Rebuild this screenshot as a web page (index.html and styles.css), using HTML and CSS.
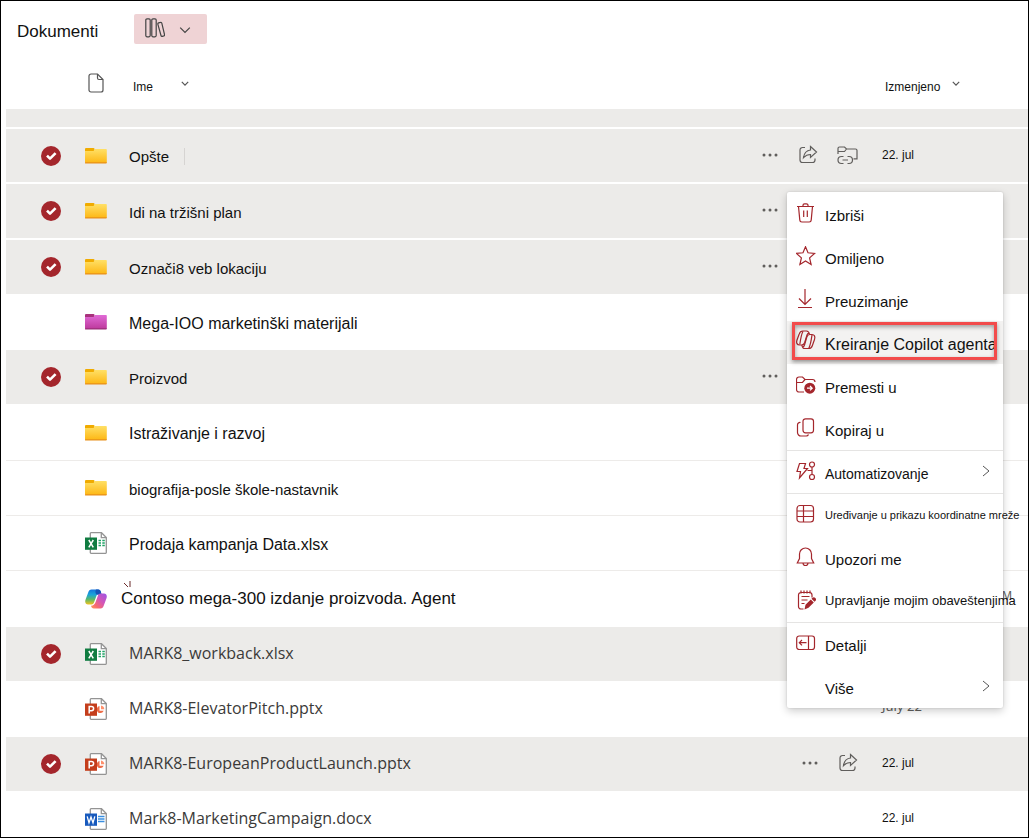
FILE: index.html
```html
<!DOCTYPE html>
<html lang="sr-Latn">
<head>
<meta charset="utf-8">
<meta name="viewport" content="width=device-width, initial-scale=1">
<title>Dokumenti</title>
<link rel="stylesheet" href="styles.css">
</head>
<body>
<svg class="defs" aria-hidden="true">
  <defs>
    <linearGradient id="g-yellow" x1="0" y1="0" x2="0" y2="1"><stop offset="0" stop-color="#ffe066"/><stop offset="1" stop-color="#fdb714"/></linearGradient>
    <linearGradient id="g-pink" x1="0" y1="0" x2="0" y2="1"><stop offset="0" stop-color="#e06ad6"/><stop offset="1" stop-color="#bd3a9c"/></linearGradient>
    <linearGradient id="g-cop-a" x1="0" y1="0" x2="0" y2="1"><stop offset="0" stop-color="#1474dc"/><stop offset=".35" stop-color="#1aa5d8"/><stop offset=".65" stop-color="#58b86b"/><stop offset="1" stop-color="#f4c21c"/></linearGradient>
    <linearGradient id="g-cop-b" x1="1" y1="0" x2="0" y2="1"><stop offset="0" stop-color="#9a55e8"/><stop offset=".45" stop-color="#d556b5"/><stop offset=".75" stop-color="#f76b6e"/><stop offset="1" stop-color="#ff9a5a"/></linearGradient>
    <symbol id="tick" viewBox="0 0 20 20"><circle cx="10" cy="10" r="10" fill="#a4262c"/><path d="M6 9.700l3 3 5.600-5.600" fill="none" stroke="#fff" stroke-width="2.600" stroke-linejoin="round"/></symbol>
    <symbol id="folder" viewBox="0 0 22 22"><path d="M0 4a1 1 0 0 1 1-1h7.500a1 1 0 0 1 1 1v3H0z" fill="#f0ab00"/><path d="M0 6h8.500l1.500-2H21a.8.8 0 0 1 .8.800V17a1 1 0 0 1-1 1H1a1 1 0 0 1-1-1z" fill="url(#g-yellow)"/><path d="M0 17.200h21.800a1 1 0 0 1-1 1.300H1a1 1 0 0 1-1-1.300z" fill="#e8901a"/></symbol>
    <symbol id="folder-pink" viewBox="0 0 22 22"><path d="M0 4a1 1 0 0 1 1-1h7.500a1 1 0 0 1 1 1v3H0z" fill="#a8327c"/><path d="M0 6h8.500l1.500-2H21a.8.8 0 0 1 .8.800V17a1 1 0 0 1-1 1H1a1 1 0 0 1-1-1z" fill="url(#g-pink)"/><path d="M0 17.200h21.800a1 1 0 0 1-1 1.300H1a1 1 0 0 1-1-1.300z" fill="#9b2f78"/></symbol>
    <symbol id="sheet" viewBox="0 0 22 22"><path d="M6 .7h10.500l4.800 4.800v15.100a.7.700 0 0 1-.7.700H6a.7.700 0 0 1-.7-.7V1.400a.7.700 0 0 1 .7-.7z" fill="#fff" stroke="#949494" stroke-width="1.300"/><path d="M16.300.8v4.900h4.900" fill="none" stroke="#949494" stroke-width="1.300"/></symbol>
    <symbol id="excel" viewBox="0 0 22 22"><use href="#sheet"/><path d="M13.500 8.500h2.500m1.300 0h2.500M13.500 11h2.500m1.300 0h2.500M13.500 13.500h2.500m1.300 0h2.500" stroke="#21a366" stroke-width="1.300"/><path d="M0 5.500h12v12.300H0z" fill="#107c41"/><path d="M3.800 8l4.500 7.300M8.300 8l-4.500 7.300" stroke="#fff" stroke-width="1.500"/></symbol>
    <symbol id="ppt" viewBox="0 0 22 22"><use href="#sheet"/><path d="M14.500 8a3.600 3.600 0 1 0 4.200 4.700h-4.200z" fill="#ed6c47"/><path d="M16 7.500a4 4 0 0 1 3.300 3.800H16z" fill="#ff8f6b"/><path d="M0 5.500h12v12.300H0z" fill="#c43e1c"/><path d="M4.200 15.500v-7h2.300a2.100 2.100 0 0 1 0 4.200H4.200" fill="none" stroke="#fff" stroke-width="1.500"/></symbol>
    <symbol id="word" viewBox="0 0 22 22"><use href="#sheet"/><path d="M13 8.500h6.500M13 11h6.500M13 13.500h6.500" stroke="#3a8ee0" stroke-width="1.400"/><path d="M0 5.500h12v12.300H0z" fill="#185abd"/><path d="M2.200 8.300L4 14.800 6 9l2 5.800 1.800-6.500" fill="none" stroke="#fff" stroke-width="1.300"/></symbol>
    <symbol id="copilot" viewBox="0 0 22 22"><path d="M16 4.200c-.5-1.800-1.200-2.700-2.800-2.700H6.500C4.800 1.500 3.800 2.800 3.200 4.500L.6 11.500C-.5 14.700.8 16.500 3 16.500h3.500c1.600 0 2.200-1 2.700-2.500l2-5.500C12 6 13.500 4.200 16 4.200z" fill="url(#g-cop-a)"/><path d="M11 1.500h2.200c1.600 0 2.300.9 2.800 2.700l.8 2.500h-5c-1.500-1-1.800-3.500-.8-5.200z" fill="#1554b8"/><path d="M6 17.800c.5 1.800 1.200 2.700 2.800 2.700h6.700c1.700 0 2.700-1.300 3.300-3l2.600-7c1.100-3.200-.2-5-2.400-5h-3.500c-1.600 0-2.200 1-2.700 2.500l-2 5.500C10 16 8.500 17.800 6 17.800z" fill="url(#g-cop-b)"/></symbol>
    <symbol id="dots" viewBox="0 0 16 4"><circle cx="2" cy="2" r="1.500"/><circle cx="8" cy="2" r="1.500"/><circle cx="14" cy="2" r="1.500"/></symbol>
    <symbol id="share" viewBox="0 0 20 20"><path d="M7 2.500H4.500A2.500 2.500 0 0 0 2 5v10a2.500 2.500 0 0 0 2.500 2.500h10A2.500 2.500 0 0 0 17 15v-1.500"/><path d="M12.500 1.500l6 5.500-6 5.500V9.500c-3 0-5 1-7 3.200.6-4.500 3-7.300 7-7.700z"/></symbol>
    <symbol id="folder-link" viewBox="0 0 22 22"><path d="M2 10V4.500A1.500 1.500 0 0 1 3.500 3h5l2 2h9A1.500 1.500 0 0 1 21 6.500v8.300h-3.500M2 7.500h6.500l2-2.500"/><path d="M7.500 12.500h-2a3.500 3.500 0 0 0 0 7h2m4 0h1.500a3.500 3.500 0 0 0 0-7h-1.500M6.500 16h5.500"/></symbol>
    <symbol id="down" viewBox="0 0 10 6"><path d="M1 1l4 4 4-4"/></symbol>
    <symbol id="right" viewBox="0 0 8 12"><path d="M1 1l6 5-6 5"/></symbol>
  </defs>
</svg>

<main class="page">
  <header class="toolbar">
    <h1 class="title">Dokumenti</h1>
    <button class="view-button" type="button" aria-label="Prikaz">
      <svg class="books" viewBox="0 0 20 20" aria-hidden="true"><rect x=".8" y=".8" width="4.400" height="18" rx="1.200"/><rect x="6.800" y=".8" width="4.400" height="18" rx="1.200"/><path d="M13.600 4.900l1.900-.5c.6-.2 1.100.1 1.300.7l2.700 11.400c.2.700-.1 1.200-.7 1.400l-1.400.4c-.7.200-1.200-.1-1.400-.8L12.900 6.300c-.2-.7.100-1.200.7-1.400z"/></svg>
      <svg class="view-chevron" aria-hidden="true"><use href="#down"/></svg>
    </button>
  </header>

  <table class="files">
    <colgroup><col class="col-check"><col class="col-icon"><col class="col-name"><col class="col-actions"><col class="col-date"></colgroup>
    <thead>
      <tr>
        <td></td>
        <th scope="col" aria-label="Tip"><svg class="page-icon" viewBox="0 0 16 20" aria-hidden="true"><path d="M3 1h6.500L15 6.500V17a2 2 0 0 1-2 2H3a2 2 0 0 1-2-2V3a2 2 0 0 1 2-2z"/><path d="M9.500 1v4a1.500 1.500 0 0 0 1.500 1.500h4"/></svg></th>
        <th scope="col"><button class="sort sort-name" type="button"><span>Ime</span><svg aria-hidden="true"><use href="#down"/></svg></button></th>
        <td></td>
        <th scope="col"><button class="sort sort-date" type="button"><span>Izmenjeno</span><svg aria-hidden="true"><use href="#down"/></svg></button></th>
      </tr>
    </thead>
    <tbody>
      <tr class="selected gapped partial"><td></td><td></td><td></td><td></td><td></td></tr>
      <tr class="selected gapped">
        <td><label class="check"><input type="checkbox" checked aria-label="Opšte"><svg aria-hidden="true"><use href="#tick"/></svg></label></td>
        <td><svg class="file-icon" aria-hidden="true"><use href="#folder"/></svg></td>
        <td class="label"><a class="name marked" href="#">Opšte</a></td>
        <td><div class="actions"><button type="button" aria-label="Više radnji"><svg class="dots"><use href="#dots"/></svg></button><button type="button" aria-label="Deli"><svg class="line"><use href="#share"/></svg></button><button type="button" aria-label="Prečica"><svg class="line wide"><use href="#folder-link"/></svg></button></div></td>
        <td class="date">22. jul</td>
      </tr>
      <tr class="selected gapped roomy">
        <td><label class="check"><input type="checkbox" checked aria-label="Idi na tržišni plan"><svg aria-hidden="true"><use href="#tick"/></svg></label></td>
        <td><svg class="file-icon" aria-hidden="true"><use href="#folder"/></svg></td>
        <td class="label"><a class="name" href="#">Idi na tržišni plan</a></td>
        <td><div class="actions"><button type="button" aria-label="Više radnji"><svg class="dots"><use href="#dots"/></svg></button><button type="button" aria-label="Deli"><svg class="line"><use href="#share"/></svg></button><button type="button" aria-label="Prečica"><svg class="line wide"><use href="#folder-link"/></svg></button></div></td>
        <td></td>
      </tr>
      <tr class="selected">
        <td><label class="check"><input type="checkbox" checked aria-label="Označi8 veb lokaciju"><svg aria-hidden="true"><use href="#tick"/></svg></label></td>
        <td><svg class="file-icon" aria-hidden="true"><use href="#folder"/></svg></td>
        <td class="label"><a class="name" href="#">Označi8 veb lokaciju</a></td>
        <td><div class="actions"><button type="button" aria-label="Više radnji"><svg class="dots"><use href="#dots"/></svg></button><button type="button" aria-label="Deli"><svg class="line"><use href="#share"/></svg></button><button type="button" aria-label="Prečica"><svg class="line wide"><use href="#folder-link"/></svg></button></div></td>
        <td></td>
      </tr>
      <tr class="bare">
        <td></td>
        <td><svg class="file-icon" aria-hidden="true"><use href="#folder-pink"/></svg></td>
        <td class="label"><a class="name large" href="#">Mega-IOO marketinški materijali</a></td>
        <td></td><td></td>
      </tr>
      <tr class="selected">
        <td><label class="check"><input type="checkbox" checked aria-label="Proizvod"><svg aria-hidden="true"><use href="#tick"/></svg></label></td>
        <td><svg class="file-icon" aria-hidden="true"><use href="#folder"/></svg></td>
        <td class="label"><a class="name" href="#">Proizvod</a></td>
        <td><div class="actions"><button type="button" aria-label="Više radnji"><svg class="dots"><use href="#dots"/></svg></button><button type="button" aria-label="Deli"><svg class="line"><use href="#share"/></svg></button><button type="button" aria-label="Prečica"><svg class="line wide"><use href="#folder-link"/></svg></button></div></td>
        <td></td>
      </tr>
      <tr class="roomy">
        <td></td>
        <td><svg class="file-icon" aria-hidden="true"><use href="#folder"/></svg></td>
        <td class="label"><a class="name large" href="#">Istraživanje i razvoj</a></td>
        <td></td><td></td>
      </tr>
      <tr>
        <td></td>
        <td><svg class="file-icon" aria-hidden="true"><use href="#folder"/></svg></td>
        <td class="label"><a class="name" href="#">biografija-posle škole-nastavnik</a></td>
        <td></td><td></td>
      </tr>
      <tr>
        <td></td>
        <td><svg class="file-icon" aria-hidden="true"><use href="#excel"/></svg></td>
        <td class="label"><a class="name large" href="#">Prodaja kampanja Data.xlsx</a></td>
        <td></td><td></td>
      </tr>
      <tr class="roomy bare">
        <td></td>
        <td><svg class="file-icon" aria-hidden="true"><use href="#copilot"/></svg></td>
        <td class="outdent"><a class="name larger" href="#">Contoso mega-300 izdanje proizvoda. Agent<svg class="spark" viewBox="0 0 8 8" aria-hidden="true"><path d="M1 2l4 4M7 0v6"/></svg></a></td>
        <td></td>
        <td class="date tail">M</td>
      </tr>
      <tr class="selected">
        <td><label class="check"><input type="checkbox" checked aria-label="MARK8_workback.xlsx"><svg aria-hidden="true"><use href="#tick"/></svg></label></td>
        <td><svg class="file-icon" aria-hidden="true"><use href="#excel"/></svg></td>
        <td class="latin"><a class="name" href="#">MARK8_workback.xlsx</a></td>
        <td></td><td></td>
      </tr>
      <tr class="bare">
        <td></td>
        <td><svg class="file-icon" aria-hidden="true"><use href="#ppt"/></svg></td>
        <td class="latin"><a class="name" href="#">MARK8-ElevatorPitch.pptx</a></td>
        <td></td>
        <td class="date muted">July 22</td>
      </tr>
      <tr class="selected">
        <td><label class="check"><input type="checkbox" checked aria-label="MARK8-EuropeanProductLaunch.pptx"><svg aria-hidden="true"><use href="#tick"/></svg></label></td>
        <td><svg class="file-icon" aria-hidden="true"><use href="#ppt"/></svg></td>
        <td class="latin"><a class="name" href="#">MARK8-EuropeanProductLaunch.pptx</a></td>
        <td><div class="actions"><button type="button" aria-label="Više radnji"><svg class="dots"><use href="#dots"/></svg></button><button type="button" aria-label="Deli"><svg class="line"><use href="#share"/></svg></button></div></td>
        <td class="date">22. jul</td>
      </tr>
      <tr class="bare">
        <td></td>
        <td><svg class="file-icon" aria-hidden="true"><use href="#word"/></svg></td>
        <td class="latin"><a class="name" href="#">Mark8-MarketingCampaign.docx</a></td>
        <td></td>
        <td class="date">22. jul</td>
      </tr>
    </tbody>
  </table>

  <div class="menu" role="menu">
    <button class="item" type="button" role="menuitem"><svg viewBox="0 0 20 20"><path d="M1 3.500h17M7 3.500V2.300A1.500 1.500 0 0 1 8.500.8h2A1.500 1.500 0 0 1 12 2.300v1.200M2.500 3.500l1.300 13.600A2 2 0 0 0 5.800 19h7.400a2 2 0 0 0 2-1.900L16.500 3.500M7.700 7.500v6.500M11.300 7.500v6.500"/></svg><span>Izbriši</span></button>
    <button class="item" type="button" role="menuitem"><svg viewBox="0 0 20 20"><path d="M9.500.8l2.500 6 6.600.6-5 4.500 1.500 6.600-5.600-3.500-5.600 3.500 1.500-6.600-5-4.500 6.600-.6z"/></svg><span>Omiljeno</span></button>
    <button class="item" type="button" role="menuitem"><svg viewBox="0 0 20 20"><path d="M9 0v15M3 9.500l6 6 6-6M2 18.500h14"/></svg><span>Preuzimanje</span></button>
    <button class="item current" type="button" role="menuitem"><svg class="raised" viewBox="0 0 20 20"><path d="M13.500 4.300C13 2.200 12.200 1 10.500 1H6.800C5 1 3.800 2 3.200 4L1 10c-1 3 .2 5 2.500 5h2.200c1.600 0 2.500-1 3-2.500L11 5c.3-1 .8-2 2.300-2"/><path d="M5.800 14.800C6.300 17.500 7 18.500 8.800 18.500h4c1.800 0 3-1 3.600-3L18.500 9.500c1-3-.2-5-2.500-5h-2.200c-1.600 0-2.500 1-3 2.500L8.500 15c-.3 1-.8 1.800-1.800 2M7 1.200C5.500 4 4.800 7 3.800 14.500M12.800 18.300c1.500-3 2.200-6 3.200-13.500"/></svg><span class="large">Kreiranje Copilot agenta</span></button>
    <button class="item" type="button" role="menuitem"><svg viewBox="0 0 20 20"><path d="M8 17H3a2.500 2.500 0 0 1-2.500-2.500v-10A2.500 2.500 0 0 1 3 2h3.500L9 4.500h7.500A2.500 2.500 0 0 1 19 7M.5 7.500h6L9 4.500"/><circle cx="13.800" cy="13.200" r="5.500" class="solid"/><path class="white" d="M11 13.200h5M14 11l2.200 2.200-2.200 2.200"/></svg><span>Premesti u</span></button>
    <button class="item" type="button" role="menuitem"><svg viewBox="0 0 20 20"><rect x="7" y=".8" width="10.500" height="14" rx="2.500"/><path d="M4.500 4.500A2.500 2.500 0 0 0 1.500 7v7.500A3.500 3.500 0 0 0 5 18h5a2.500 2.500 0 0 0 2.500-1.500"/></svg><span>Kopiraj u</span></button>
    <button class="item divided" type="button" role="menuitem"><svg viewBox="0 0 20 20"><path d="M3.500 2.500h6L8 7.500h3.500L3.500 17l1-6.500H1z"/><circle cx="16" cy="3.500" r="2.500"/><circle cx="16" cy="16" r="2.500"/><path d="M16 6v7.500M11.500 9.500H16"/></svg><span class="narrow">Automatizovanje</span><svg class="more"><use href="#right"/></svg></button>
    <button class="item divided" type="button" role="menuitem"><svg viewBox="0 0 20 20"><rect x="1" y="1.500" width="16.500" height="16.500" rx="3"/><path d="M1 7h16.500M1 12.500h16.500M7.500 1.500V18"/></svg><span class="small">Uređivanje u prikazu koordinatne mreže</span></button>
    <button class="item" type="button" role="menuitem"><svg viewBox="0 0 20 20"><path d="M9.500 1a6 6 0 0 0-6 6v4.500L1.300 16h16.400l-2.200-4.500V7a6 6 0 0 0-6-6zM7 16a2.500 2.500 0 0 0 5 0"/></svg><span>Upozori me</span></button>
    <button class="item" type="button" role="menuitem"><svg viewBox="0 0 20 20"><path d="M7.500 19H5a2.500 2.500 0 0 1-2.500-2.500V5A2.500 2.500 0 0 1 5 2.500h8.500A2.500 2.500 0 0 1 16 5v2.500M5 .5v3M8 .5v3M11 .5v3M14 .5v3M5.500 6.500h8M5.500 10h6M5.500 13.500h3"/><path class="solid" d="M9.500 14.800l5.300-5.300 3 3-5.300 5.300-4 1.600zM15.500 8.800l.8-.8a2.100 2.100 0 0 1 3 3l-.8.800z"/></svg><span class="medium">Upravljanje mojim obaveštenjima</span></button>
    <button class="item divided" type="button" role="menuitem"><svg viewBox="0 0 20 20"><rect x=".7" y="3" width="17.800" height="13.500" rx="2.500"/><path d="M12.500 3v13.500M10.500 9.700H3.500M6 7L3.300 9.700 6 12.400"/></svg><span>Detalji</span></button>
    <button class="item" type="button" role="menuitem"><svg viewBox="0 0 20 20"></svg><span>Više</span><svg class="more"><use href="#right"/></svg></button>
  </div>
</main>
</body>
</html>
```
FILE: styles.css
```css
* { box-sizing: border-box; }

body {
  margin: 0;
  background: #fff;
  color: #111;
  font-family: "Liberation Sans", Arial, sans-serif;
  font-size: 15px;
}

button {
  margin: 0;
  padding: 0;
  border: 0;
  background: none;
  color: inherit;
  font: inherit;
  text-align: left;
}

svg { display: block; flex: none; }
.defs { position: absolute; width: 0; height: 0; }

.page {
  position: relative;
  height: 100vh;
  overflow: hidden;
  border: 1px solid #000;
  padding-left: 5px;
}

.toolbar {
  display: flex;
  align-items: center;
  gap: 36px;
  height: 57px;
  padding-left: 11px;
}

.title { margin: 4px 0 0; font-size: 17px; font-weight: 400; line-height: 20px; }

.view-button {
  display: flex;
  align-items: center;
  gap: 14px;
  height: 30px;
  margin-bottom: 2px;
  padding: 0 16px 2px 11px;
  border-radius: 2px;
  background: #efd3d5;
}

.books { width: 20px; height: 20px; fill: none; stroke: #444; stroke-width: 1.2; }
.view-chevron { width: 12px; height: 8px; margin-top: 4px; fill: none; stroke: #444; }

/* File list */
.files { width: 100%; table-layout: fixed; border-spacing: 0; }
.col-check { width: 79px; }
.col-icon { width: 44px; }
.col-actions { width: 130px; }
.col-date { width: 146px; }

th, td { padding: 0; text-align: left; font-weight: 400; }
thead tr { height: 51px; }

.page-icon { width: 16px; height: 20px; margin: 0 0 2px 3px; fill: none; stroke: #555; stroke-width: 1.2; }

.sort { display: flex; align-items: center; font-size: 12px; line-height: 16px; }
.sort span { padding-top: 7px; }
.sort svg { width: 8px; height: 5px; fill: none; stroke: #555; stroke-width: 1.5; }
.sort-name { gap: 28px; padding-left: 4px; }
.sort-date { gap: 12px; padding-left: 3px; }

tbody tr { height: 55px; }
tbody tr.roomy { height: 56px; }
tbody tr.partial { height: 20px; }
tbody td { border-bottom: 1px solid #edebe9; }
tbody .bare td { border-bottom-color: #fff; }
tbody .selected td { border-bottom-color: #fff; background: #ecebe9; }
tbody .gapped td { border-bottom-width: 2px; }

.check { display: grid; width: 20px; height: 20px; margin-left: 35px; }
.check input { grid-area: 1 / 1; width: 20px; height: 20px; margin: 0; appearance: none; border-radius: 50%; }
.check svg { grid-area: 1 / 1; width: 20px; height: 20px; }

.file-icon { width: 22px; height: 22px; }

.name {
  position: relative;
  color: inherit;
  line-height: 20px;
  text-decoration: none;
  white-space: nowrap;
}
.name.large { font-size: 16px; }
.name.larger { font-size: 17px; }
.name.marked { padding-right: 15px; border-right: 1px solid #d6d4d2; }

.label { padding-top: 3px; }
.latin { padding-bottom: 2px; color: #3b3a39; font-family: "Open Sans", sans-serif; font-size: 16px; }

.outdent .name { margin-left: -8px; }
.spark { position: absolute; left: 2px; top: -8px; width: 8px; height: 8px; fill: none; stroke: #6b2b2b; }

.actions { display: flex; justify-content: flex-end; align-items: center; gap: 18px; padding: 0 24px 2px 0; }
.actions svg { width: 20px; height: 20px; fill: #605e5c; }
.actions .line { fill: none; stroke: #605e5c; stroke-width: 1.2; }
.actions .wide { width: 22px; height: 22px; }
.actions .dots { width: 16px; height: 4px; margin-right: 2px; }

.date { padding-bottom: 2px; font-size: 12px; line-height: 16px; }
.date.muted { padding-bottom: 6px; color: #605e5c; font-family: "Noto Sans", sans-serif; font-size: 13px; }
.date.tail { padding: 0 16px 6px 0; color: #605e5c; text-align: right; }

/* Context menu */
.menu {
  position: absolute;
  top: 191px;
  right: 25px;
  width: 216px;
  border-radius: 2px;
  background: #fff;
  box-shadow: 0 3px 8px rgba(0, 0, 0, .2), 0 0 2px rgba(0, 0, 0, .15);
}

.item {
  position: relative;
  display: flex;
  align-items: center;
  gap: 9px;
  width: 100%;
  height: 43px;
  padding: 0 13px 2px 9px;
  white-space: nowrap;
  line-height: 20px;
}
.item svg { width: 20px; height: 20px; fill: none; stroke: #a4262c; stroke-width: 1.2; }
.item .raised { margin-bottom: 4px; }
.item .solid { fill: #a4262c; stroke: none; }
.item .white { stroke: #fff; }
.item span { padding-top: 6px; }
.item .large { font-size: 16px; }
.item .narrow { font-size: 14px; }
.item .medium { padding-top: 3px; font-size: 13px; }
.item .small { padding-top: 1px; font-size: 11px; }
.item .more { width: 8px; height: 12px; margin-left: auto; stroke: #555; stroke-width: 1; }

.divided { border-top: 1px solid #e5e4e3; }

.current { background: #f3f2f1; }
.current::after {
  position: absolute;
  inset: 1px 6px 4px 5px;
  border: 3px solid #f24b4b;
  box-shadow: 0 2px 4px rgba(0, 0, 0, .4), inset 0 2px 4px rgba(0, 0, 0, .35);
  content: "";
}
```
